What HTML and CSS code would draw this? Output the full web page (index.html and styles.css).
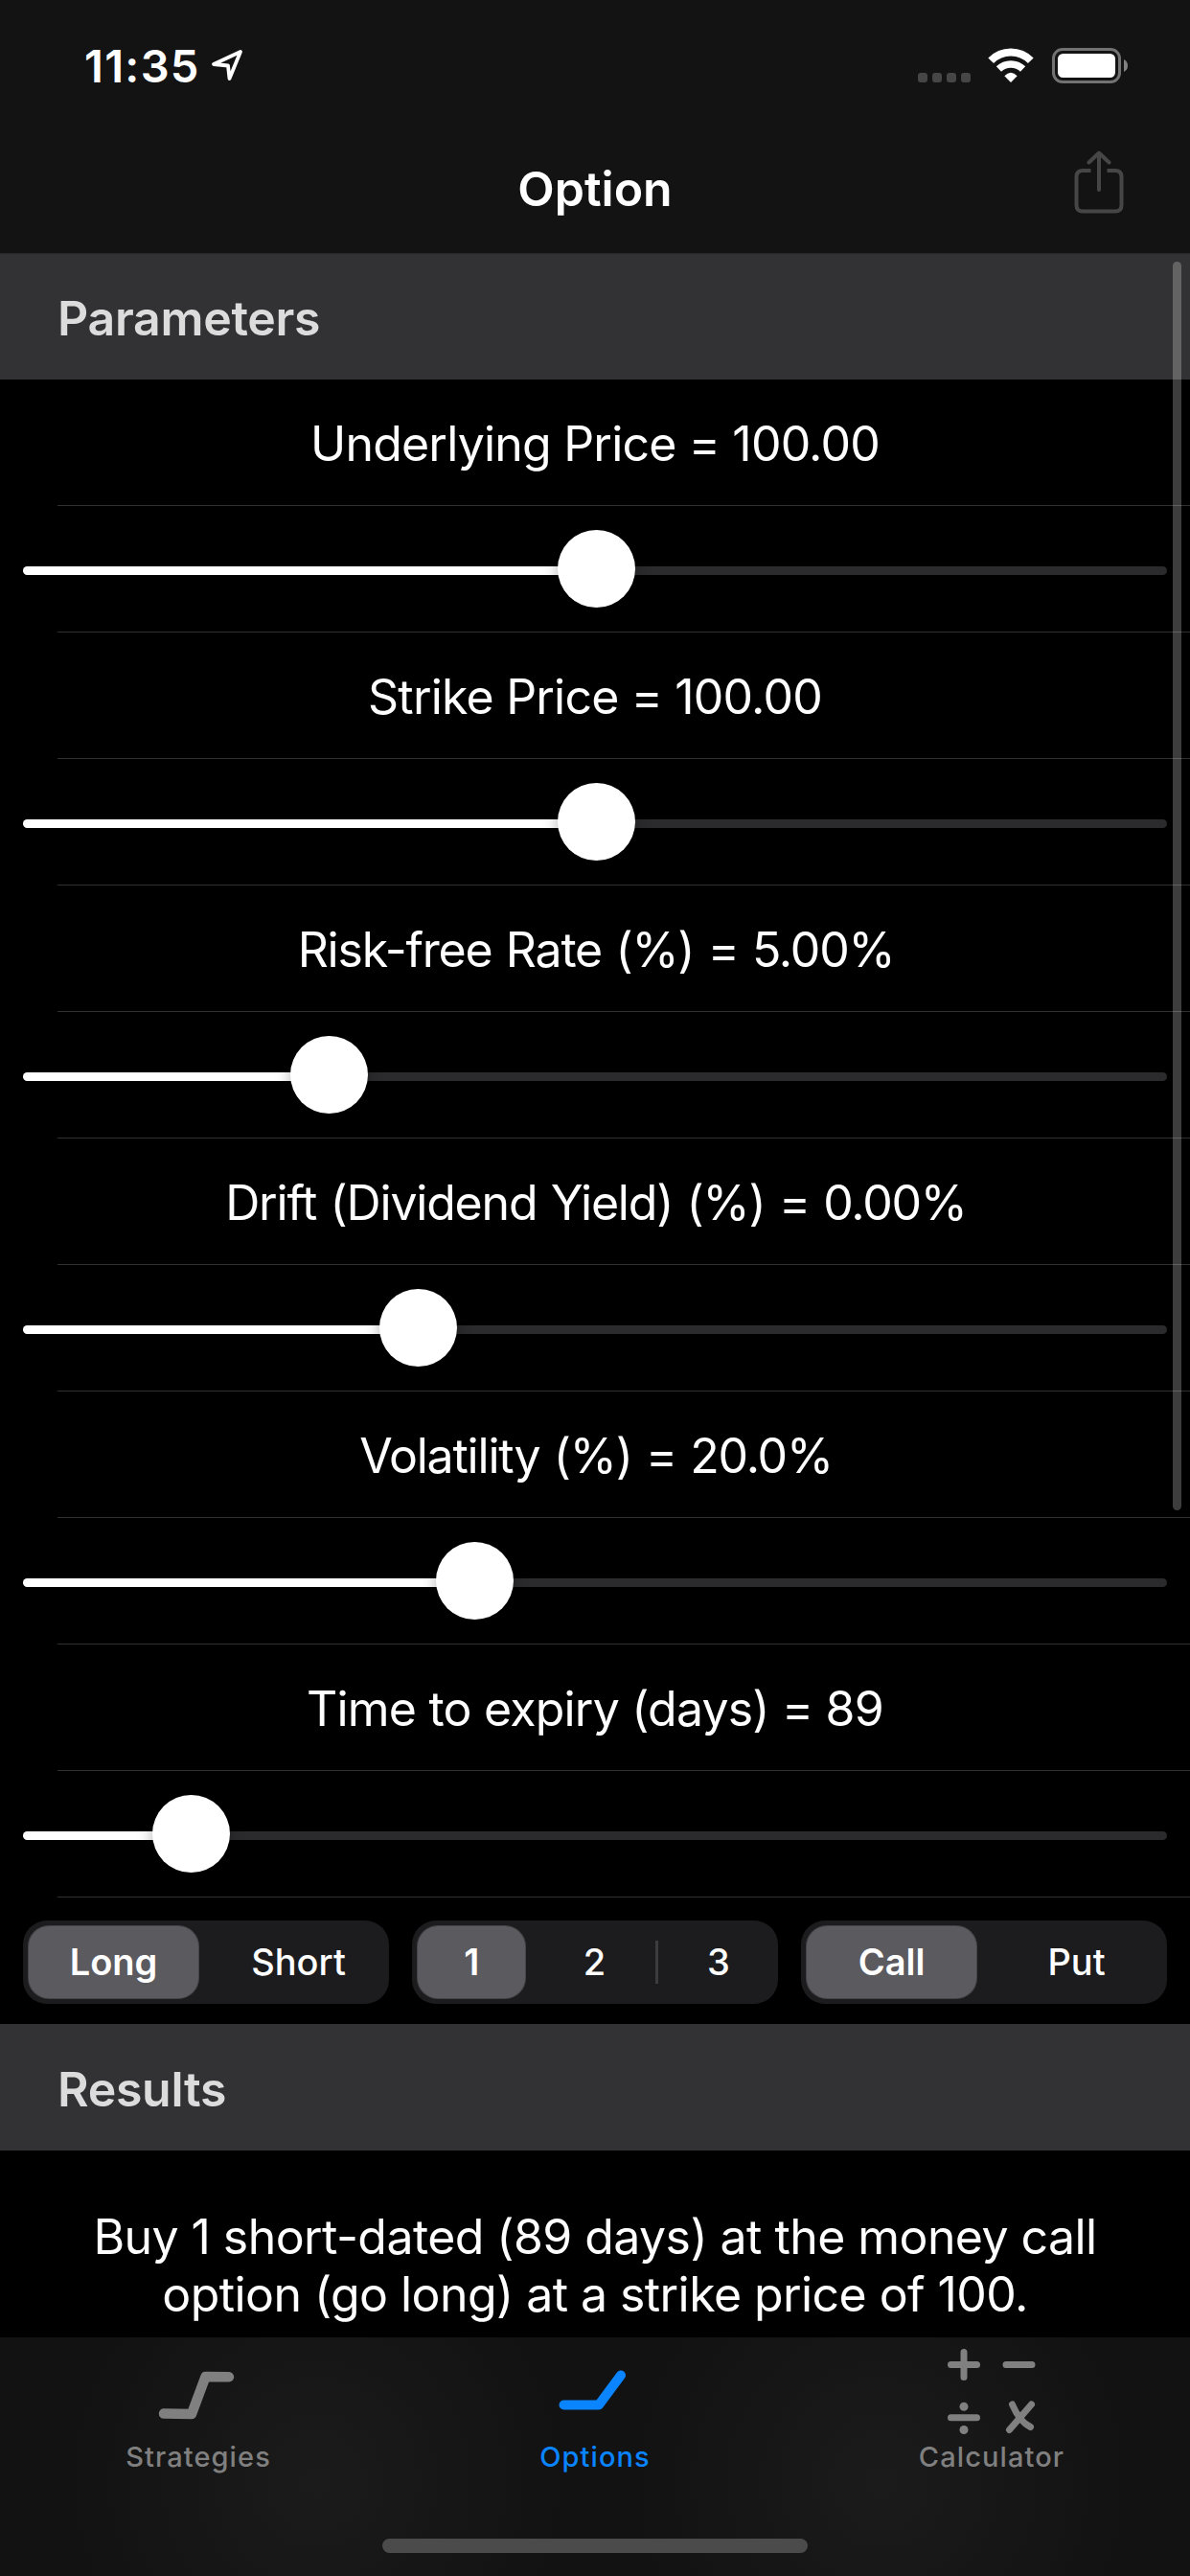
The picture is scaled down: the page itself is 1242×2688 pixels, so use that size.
FILE: index.html
```html
<!DOCTYPE html>
<html lang="en">
  <head>
    <meta charset="UTF-8" />
    <meta name="viewport" content="width=device-width, initial-scale=1.0" />
    <title>Option</title>
    <link rel="stylesheet" href="styles.css">
  </head>
  <body>
    <header>
      <div class="status-bar">
        <span class="time">11:35</span>
        <svg class="location" width="36" height="36" viewBox="0 0 36 36">
          <path d="M32 4 L4 17 L19 18.5 L20.5 32 Z" />
        </svg>
        <div class="status-icons">
          <div class="signal"><i></i><i></i><i></i><i></i></div>
          <svg class="wifi" width="48" height="37" viewBox="0 0 48 37">
            <path d="M3.2 13.2 A29 29 0 0 1 44.8 13.2" stroke-width="8" />
            <path d="M11.4 22 A18.2 18.2 0 0 1 36.6 22" stroke-width="7.5" />
            <path class="dot" d="M17.3 29.3 Q24 22.3 30.7 29.3 L24 36 Z" />
          </svg>
          <svg class="battery" width="80" height="37" viewBox="0 0 80 37">
            <rect class="case" x="1.5" y="1.5" width="69" height="34" rx="9.5" />
            <rect class="level" x="6" y="6" width="60" height="25" rx="5.5" />
            <path class="cap" d="M75 12 Q79 14 79 18.5 Q79 23 75 25 Z" />
          </svg>
        </div>
      </div>
      <div class="nav-bar">
        <h1>Option</h1>
        <svg class="share" width="52" height="68" viewBox="0 0 52 68">
          <path d="M17.5 21 H9 Q2.5 21 2.5 27.5 V57 Q2.5 63.5 9 63.5 H43 Q49.5 63.5 49.5 57 V27.5 Q49.5 21 43 21 H34.5" />
          <path d="M26 41 V3 M15.5 12.5 L26 2.5 L36.5 12.5" stroke-linecap="round" stroke-linejoin="round" />
        </svg>
      </div>
    </header>
    <main>
      <h2 class="first">Parameters</h2>
      <div class="row label">Underlying Price = 100.00</div>
      <div class="row"><div class="slider"><div class="fill" style="width: 50.13%"></div></div></div>
      <div class="row label">Strike Price = 100.00</div>
      <div class="row"><div class="slider"><div class="fill" style="width: 50.13%"></div></div></div>
      <div class="row label percent">Risk-free Rate (%) = 5.00%</div>
      <div class="row"><div class="slider"><div class="fill" style="width: 26.76%"></div></div></div>
      <div class="row label percent">Drift (Dividend Yield) (%) = 0.00%</div>
      <div class="row"><div class="slider"><div class="fill" style="width: 34.55%"></div></div></div>
      <div class="row label percent">Volatility (%) = 20.0%</div>
      <div class="row"><div class="slider"><div class="fill" style="width: 39.57%"></div></div></div>
      <div class="row label">Time to expiry (days) = 89</div>
      <div class="row"><div class="slider"><div class="fill" style="width: 14.7%"></div></div></div>
      <div class="segments">
        <div class="segmented">
          <span class="selected">Long</span>
          <span>Short</span>
        </div>
        <div class="segmented thirds">
          <span class="selected">1</span>
          <span>2</span>
          <i></i>
          <span>3</span>
        </div>
        <div class="segmented">
          <span class="selected">Call</span>
          <span>Put</span>
        </div>
      </div>
      <h2>Results</h2>
      <p>Buy 1 short-dated (89 days) at the money call<br>option (go long) at a strike price of 100.</p>
      <div class="scrollbar"></div>
    </main>
    <footer>
      <nav>
        <a>
          <svg width="120" height="105" viewBox="0 0 120 105">
            <path d="M24 79.5 L53 80 L67.5 41 L92 41.3" stroke-width="10.5" />
          </svg>
          Strategies
        </a>
        <a class="active">
          <svg width="120" height="105" viewBox="0 0 120 105">
            <path d="M27.5 70.5 H64 L87 39.5" stroke-width="10" />
          </svg>
          Options
        </a>
        <a>
          <svg width="120" height="105" viewBox="0 0 120 105">
            <path d="M17.5 28.5 H44.5 M31 15.5 V41.5 M75 28.5 H102" stroke-width="7" />
            <path d="M17.5 83.8 H44.5 M78.5 96.5 L101.5 70 M81.5 70 Q89 88 100.5 93.5" stroke-width="7" />
            <circle cx="31" cy="72.2" r="4.5" />
            <circle cx="31" cy="96.5" r="4.5" />
          </svg>
          Calculator
        </a>
      </nav>
      <div class="home-indicator"></div>
    </footer>
  </body>
</html>
```
FILE: styles.css
```css
* {
  box-sizing: border-box;
}

body {
  margin: 0;
  width: 1242px;
  height: 2688px;
  display: flex;
  flex-direction: column;
  overflow: hidden;
  color: #fff;
  background-color: #000;
  font-family: Inter, "Liberation Sans", sans-serif;
  font-size: 50px;
}

header {
  height: 264px;
  background-color: #131313;
}

.status-bar {
  height: 132px;
  padding: 4px 64px 0 88px;
  display: flex;
  align-items: center;
}

.time {
  font-size: 47px;
  font-weight: 600;
  letter-spacing: 1.3px;
}

.location {
  margin-left: 10px;
  fill: none;
  stroke: #fff;
  stroke-width: 3.8;
  stroke-linejoin: round;
}

.status-icons {
  margin-left: auto;
  display: flex;
  align-items: flex-end;
}

.signal {
  display: flex;
  gap: 5px;
  margin-right: 18px;
  padding-bottom: 1px;
}

.signal i {
  width: 10px;
  height: 10px;
  border-radius: 3px;
  background-color: #464646;
}

.wifi {
  margin-right: 19px;
  fill: none;
  stroke: #fff;
}

.wifi .dot {
  fill: #fff;
  stroke: none;
}

.battery .case {
  fill: none;
  stroke: #727272;
  stroke-width: 3;
}

.battery .level {
  fill: #fff;
}

.battery .cap {
  fill: #828282;
}

.nav-bar {
  height: 132px;
  padding: 0 69px 0 121px;
  display: flex;
  align-items: center;
}

.nav-bar h1 {
  flex: 1;
  margin: 0 0 2px;
  font-size: 50px;
  font-weight: 600;
  text-align: center;
}

.share {
  margin-bottom: 14px;
  fill: none;
  stroke: #464646;
  stroke-width: 4;
}

main {
  position: relative;
  height: 2175px;
  overflow: hidden;
}

h2 {
  height: 132px;
  margin: 0;
  padding: 3px 60px 0;
  display: flex;
  align-items: center;
  font-size: 50px;
  font-weight: 600;
  letter-spacing: -0.3px;
  color: #dcdcdd;
  background-color: #323234;
}

h2.first {
  border-top: 1px solid #272728;
}

.row {
  height: 132px;
  padding: 3px 24px 0;
  display: flex;
  align-items: center;
  justify-content: center;
  background: linear-gradient(#303031, #303031) 60px 100% / 100% 1px no-repeat;
}

.label {
  padding-top: 1px;
  letter-spacing: -0.8px;
}

.percent {
  padding-left: 26px;
  letter-spacing: -1.2px;
  word-spacing: 1.5px;
}

.slider {
  width: 100%;
  height: 9px;
  border-radius: 5px;
  background-color: #2b2b2d;
}

.fill {
  position: relative;
  height: 9px;
  border-radius: 5px;
  background-color: #fff;
}

.fill::after {
  content: "";
  position: absolute;
  top: -38px;
  right: -40px;
  width: 81px;
  height: 81px;
  border-radius: 50%;
  background-color: #fff;
  box-shadow: 0 2px 16px rgba(0, 0, 0, 0.3);
}

.segments {
  height: 132px;
  padding: 24px 24px 21px;
  display: flex;
  gap: 24px;
}

.segmented {
  flex: 1;
  padding: 6px;
  display: flex;
  align-items: center;
  gap: 16px;
  border-radius: 25px;
  background-color: #1c1c1e;
  font-size: 38px;
  font-weight: 500;
}

.segmented span {
  flex: 1;
  height: 75px;
  line-height: 75px;
  text-align: center;
}

.segmented .selected {
  border-radius: 21px;
  background-color: #5b5a5f;
  box-shadow: 0 0 0 1px #454448;
  font-weight: 600;
}

.thirds i {
  width: 3px;
  height: 45px;
  margin: 0 -9px;
  background-color: #3c3c3f;
}

p {
  margin: 0;
  padding-top: 60px;
  line-height: 60px;
  text-align: center;
  letter-spacing: -0.57px;
}

.scrollbar {
  position: absolute;
  top: 9px;
  right: 9px;
  width: 9px;
  height: 1303px;
  border-radius: 5px;
  background-color: rgba(255, 255, 255, 0.24);
}

footer {
  height: 249px;
  background:
    radial-gradient(circle at 330px 150px, rgba(27, 27, 27, 1), rgba(27, 27, 27, 0) 260px),
    radial-gradient(circle at 920px 150px, rgba(27, 27, 27, 1), rgba(27, 27, 27, 0) 260px),
    #121212;
}

nav {
  height: 210px;
  display: flex;
}

nav a {
  flex: 1;
  display: flex;
  flex-direction: column;
  align-items: center;
  font-size: 29px;
  line-height: 40px;
  font-weight: 500;
  letter-spacing: 1.1px;
  color: #808080;
}

nav a.active {
  color: #0a84ff;
}

nav svg {
  fill: none;
  stroke: currentColor;
  stroke-linecap: round;
  stroke-linejoin: round;
}

nav circle {
  fill: currentColor;
  stroke: none;
}

.home-indicator {
  width: 444px;
  height: 15px;
  margin: 0 auto;
  border-radius: 8px;
  background-color: #4b4b4b;
}
```
